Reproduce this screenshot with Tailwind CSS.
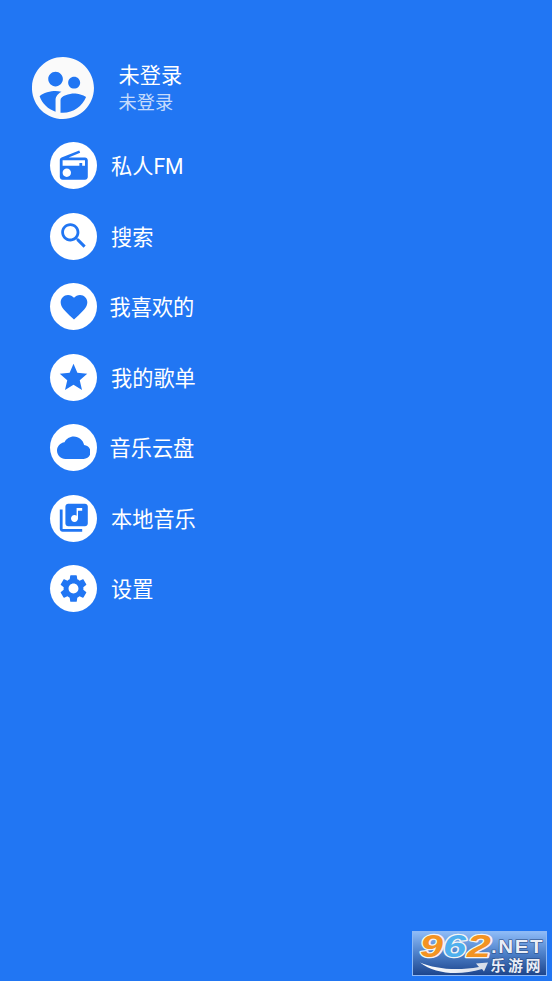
<!DOCTYPE html>
<html lang="zh-CN">
<head>
    <meta charset="UTF-8">
    <meta name="viewport" content="width=device-width, initial-scale=1.0">
    <title>音乐</title>
    <script src="https://cdn.jsdelivr.net/npm/@tailwindcss/browser@4"></script>
</head>
<body class="relative min-h-screen overflow-hidden bg-[#2176f3] text-white font-[Roboto,'Noto_Sans_CJK_SC',sans-serif]">
    <header class="flex items-start pt-[57px] pl-8">
        <svg class="size-[62px] shrink-0" viewBox="2 2 20 20" fill="#fafafa">
            <path d="M11.99 2c-5.52 0-10 4.48-10 10s4.48 10 10 10 10-4.48 10-10-4.48-10-10-10zm3.61 6.34c1.07 0 1.93.86 1.93 1.93 0 1.07-.86 1.93-1.93 1.93-1.07 0-1.93-.86-1.93-1.93-.01-1.07.86-1.93 1.93-1.93zm-6-1.58c1.3 0 2.36 1.06 2.36 2.36 0 1.3-1.06 2.36-2.36 2.36s-2.36-1.06-2.36-2.36c0-1.31 1.05-2.36 2.36-2.36zm0 9.13v3.75c-2.4-.75-4.3-2.6-5.14-4.96 1.05-1.12 3.67-1.69 5.14-1.69.53 0 1.2.08 1.9.22-1.64.87-1.9 2.02-1.9 2.68zM11.99 20c-.27 0-.53-.01-.79-.04v-4.07c0-1.42 2.94-2.13 4.4-2.13 1.07 0 2.92.39 3.84 1.15-1.17 2.97-4.06 5.09-7.45 5.09z"/>
        </svg>
        <div class="pt-[5px] pl-[24.5px]">
            <h1 class="text-[21.2px] leading-[28px]">未登录</h1>
            <p class="text-[18.2px] leading-[26px] text-white/75">未登录</p>
        </div>
    </header>

    <nav class="flex flex-col gap-[23.5px] pt-[23px] pl-[50px] text-[21.2px] leading-[44px]">
        <a class="flex h-[47px] items-center gap-[14px]">
            <span class="flex size-[47px] items-center justify-center rounded-full bg-white">
                <svg class="size-[33.6px]" viewBox="0 0 24 24" fill="#2176f3"><path d="M3.24 6.15C2.51 6.43 2 7.17 2 8v12c0 1.1.89 2 2 2h16c1.11 0 2-.9 2-2V8c0-1.11-.89-2-2-2H8.3l8.26-3.34L15.88 1 3.24 6.15zM7 20c-1.66 0-3-1.34-3-3s1.34-3 3-3 3 1.34 3 3-1.34 3-3 3zm13-8h-2v-2h-2v2H4V8h16v4z"/></svg>
            </span>
            <span class="pt-0.5">私人FM</span>
        </a>
        <a class="flex h-[47px] items-center gap-[14px]">
            <span class="flex size-[47px] items-center justify-center rounded-full bg-white">
                <svg class="size-[33.6px]" viewBox="0 0 24 24" fill="#2176f3"><path d="M15.5 14h-.79l-.28-.27C15.41 12.59 16 11.11 16 9.5 16 5.91 13.09 3 9.5 3S3 5.91 3 9.5 5.91 16 9.5 16c1.61 0 3.09-.59 4.23-1.57l.27.28v.79l5 4.99L20.49 19l-4.99-5zm-6 0C7.01 14 5 11.99 5 9.5S7.01 5 9.5 5 14 7.01 14 9.5 11.99 14 9.5 14z"/></svg>
            </span>
            <span class="pt-[3px]">搜索</span>
        </a>
        <a class="flex h-[47px] items-center gap-[12.5px]">
            <span class="flex size-[47px] items-center justify-center rounded-full bg-white">
                <svg class="size-[32px]" viewBox="0 0 24 24" fill="#2176f3"><path d="M12 21.35l-1.45-1.32C5.4 15.36 2 12.28 2 8.5 2 5.42 4.42 3 7.5 3c1.74 0 3.41.81 4.5 2.09C13.09 3.81 14.76 3 16.5 3 19.58 3 22 5.42 22 8.5c0 3.78-3.4 6.86-8.55 11.54L12 21.35z"/></svg>
            </span>
            <span class="pt-[3px]">我喜欢的</span>
        </a>
        <a class="flex h-[47px] items-center gap-[14px]">
            <span class="flex size-[47px] items-center justify-center rounded-full bg-white">
                <svg class="size-[33px]" viewBox="0 0 24 24" fill="#2176f3"><path d="M12 17.27L18.18 21l-1.64-7.03L22 9.24l-7.19-.61L12 2 9.19 8.63 2 9.24l5.46 4.73L5.82 21z"/></svg>
            </span>
            <span class="pt-[3px]">我的歌单</span>
        </a>
        <a class="flex h-[47px] items-center gap-[12.5px]">
            <span class="flex size-[47px] items-center justify-center rounded-full bg-white">
                <svg class="size-[33.6px]" viewBox="0 0 24 24" fill="#2176f3"><path d="M19.35 10.04C18.67 6.59 15.64 4 12 4 9.11 4 6.6 5.64 5.35 8.04 2.34 8.36 0 10.91 0 14c0 3.31 2.69 6 6 6h13c2.76 0 5-2.24 5-5 0-2.64-2.05-4.78-4.65-4.96z"/></svg>
            </span>
            <span class="pt-[3px]">音乐云盘</span>
        </a>
        <a class="flex h-[47px] items-center gap-[14px]">
            <span class="flex size-[47px] items-center justify-center rounded-full bg-white">
                <svg class="size-[33.6px]" viewBox="0 0 24 24" fill="#2176f3"><path d="M20 2H8c-1.1 0-2 .9-2 2v12c0 1.1.9 2 2 2h12c1.1 0 2-.9 2-2V4c0-1.1-.9-2-2-2zm-2 5h-3v5.5c0 1.38-1.12 2.5-2.5 2.5S10 13.88 10 12.5s1.12-2.5 2.5-2.5c.57 0 1.08.19 1.5.51V5h4v2zM4 6H2v14c0 1.1.9 2 2 2h14v-2H4V6z"/></svg>
            </span>
            <span class="pt-[3px]">本地音乐</span>
        </a>
        <a class="flex h-[47px] items-center gap-[14px]">
            <span class="flex size-[47px] items-center justify-center rounded-full bg-white">
                <svg class="size-[33px]" viewBox="0 0 24 24" fill="#2176f3"><path d="M19.14 12.94c.04-.3.06-.61.06-.94 0-.32-.02-.64-.07-.94l2.03-1.58c.18-.14.23-.41.12-.61l-1.92-3.32c-.12-.22-.37-.29-.59-.22l-2.39.96c-.5-.38-1.03-.7-1.62-.94l-.36-2.54c-.04-.24-.24-.41-.48-.41h-3.84c-.24 0-.43.17-.47.41l-.36 2.54c-.59.24-1.13.57-1.62.94l-2.39-.96c-.22-.08-.47 0-.59.22L2.74 8.87c-.12.21-.08.47.12.61l2.03 1.58c-.05.3-.09.63-.09.94s.02.64.07.94l-2.03 1.58c-.18.14-.23.41-.12.61l1.92 3.32c.12.22.37.29.59.22l2.39-.96c.5.38 1.03.7 1.62.94l.36 2.54c.05.24.24.41.48.41h3.84c.24 0 .44-.17.47-.41l.36-2.54c.59-.24 1.13-.56 1.62-.94l2.39.96c.22.08.47 0 .59-.22l1.92-3.32c.12-.22.07-.47-.12-.61l-2.01-1.58zM12 15.6c-1.98 0-3.6-1.62-3.6-3.6s1.62-3.6 3.6-3.6 3.6 1.62 3.6 3.6-1.62 3.6-3.6 3.6z"/></svg>
            </span>
            <span class="pt-[3px]">设置</span>
        </a>
    </nav>

    <!-- site badge, bottom right -->
    <svg class="absolute right-[5px] bottom-[5px] h-[45px] w-[135px] overflow-visible" viewBox="0 0 135 45">
        <defs>
            <linearGradient id="badge" x1="0" y1="0" x2="0" y2="1">
                <stop offset="0" stop-color="#8fbcf8"/>
                <stop offset=".5" stop-color="#4d80c9"/>
                <stop offset="1" stop-color="#1c448c"/>
            </linearGradient>
            <linearGradient id="swoosh" x1="0" y1="0" x2="1" y2="0">
                <stop offset="0" stop-color="#ffffff"/>
                <stop offset="1" stop-color="#d5dce8"/>
            </linearGradient>
        </defs>
        <rect x=".5" y=".5" width="134" height="44" fill="url(#badge)" stroke="#8fb9f5"/>
        <g font-family="'Liberation Sans', sans-serif" font-weight="bold" font-style="italic" font-size="31" stroke="#f4f4f4" stroke-width="2.5" stroke-linejoin="round" paint-order="stroke">
            <text x="8" y="26" fill="#f39322" textLength="23" lengthAdjust="spacingAndGlyphs">9</text>
            <text x="31" y="26" fill="#4fb0ee" textLength="23" lengthAdjust="spacingAndGlyphs">6</text>
            <text x="55" y="26" fill="#f39322" textLength="24" lengthAdjust="spacingAndGlyphs">2</text>
        </g>
        <path d="M8 31.5C23 38 45 40 67 36l-3-3.500 12-1-4 9-2-2.500C47 45 23 43 8 31.500z" fill="url(#swoosh)"/>
        <g fill="#e9eef7" stroke="#25457c" stroke-width="1" paint-order="stroke">
            <text x="79" y="21.5" font-family="'Liberation Sans', sans-serif" font-weight="bold" font-size="17.5" letter-spacing="1.3" textLength="53" lengthAdjust="spacingAndGlyphs">.NET</text>
            <text x="78.5" y="39.500" font-family="'Noto Sans CJK SC', sans-serif" font-weight="bold" font-size="15" textLength="50">乐游网</text>
        </g>
    </svg>
</body>
</html>
